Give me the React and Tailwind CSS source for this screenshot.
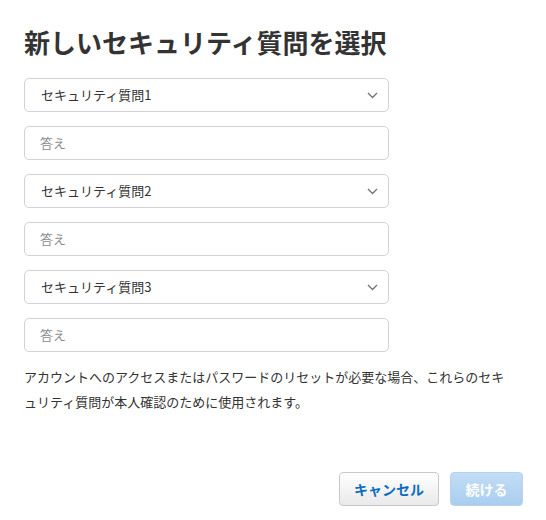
import React from 'react'

const font = { fontFamily: '"Noto Sans CJK JP", "Noto Sans", sans-serif' }

const Chevron = () => (
  <svg width="11" height="7" viewBox="0 0 11 7" className="text-gray-500">
    <path d="M1 1l4.5 4.5L10 1" fill="none" stroke="currentColor" strokeWidth="1.3" />
  </svg>
)

const QuestionSelect = ({ label }) => (
  <div className="flex h-[34px] w-[365px] items-center justify-between rounded-[5px] border border-[#d2d2d6] bg-white pl-[16px] pr-[10px] text-[13px] text-[#333]">
    <span>{label}</span>
    <Chevron />
  </div>
)

const AnswerInput = () => (
  <div className="flex h-[34px] w-[365px] items-center rounded-[5px] border border-[#d2d2d6] bg-white pl-[15px] text-[13px] text-[#8e8e93]">
    答え
  </div>
)

export default function App() {
  return (
    <div style={font} className="h-[520px] w-[546px] bg-white pl-6 pr-5 pt-[24px] text-[#333]">
      <h1 className="text-[26px] font-bold leading-[36px] text-[#333]">新しいセキュリティ質問を選択</h1>

      <div className="mt-[18px] flex flex-col gap-[14px]">
        {[1, 2, 3].map((n) => (
          <React.Fragment key={n}>
            <QuestionSelect label={`セキュリティ質問${n}`} />
            <AnswerInput />
          </React.Fragment>
        ))}
      </div>

      <p className="mt-[12px] w-[492px] text-[13px] leading-[25px] text-[#333] [line-break:loose]">
        アカウントへのアクセスまたはパスワードのリセットが必要な場合、これらのセキュリティ質問が本人確認のために使用されます。
      </p>

      <div className="mt-[58px] flex justify-end gap-[11px] pr-[3px]">
        <button className="h-[34px] w-[100px] rounded-[4px] border border-[#c8c8c8] bg-gradient-to-b from-white to-[#e9e9e9] text-[14px] font-bold text-[#0a6dc2]">
          キャンセル
        </button>
        <button className="h-[34px] w-[73px] rounded-[4px] border border-[#b5d3ef] bg-gradient-to-b from-[#c2ddf5] to-[#aacdef] text-[14px] font-bold text-white">
          続ける
        </button>
      </div>
    </div>
  )
}
